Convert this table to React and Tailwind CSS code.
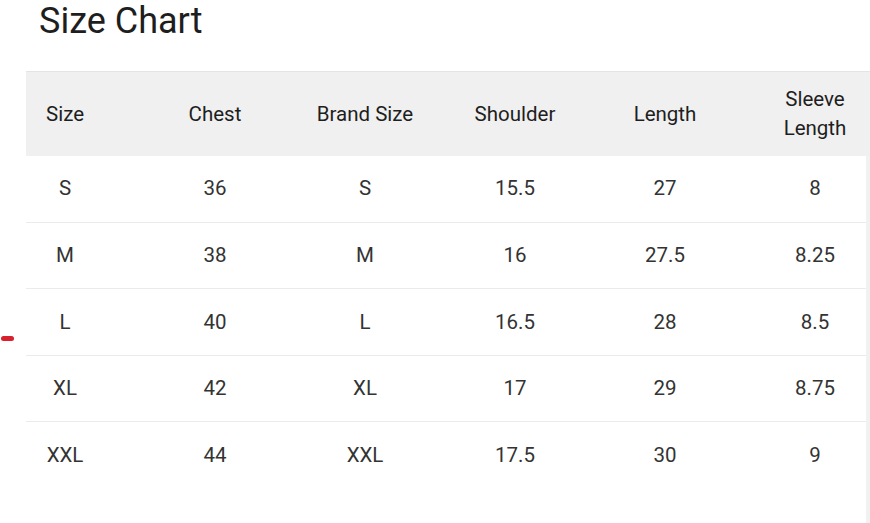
import React from "react";

const headers = ["Size", "Chest", "Brand Size", "Shoulder", "Length", "Sleeve Length"];
const rows = [
  ["S", "36", "S", "15.5", "27", "8"],
  ["M", "38", "M", "16", "27.5", "8.25"],
  ["L", "40", "L", "16.5", "28", "8.5"],
  ["XL", "42", "XL", "17", "29", "8.75"],
  ["XXL", "44", "XXL", "17.5", "30", "9"],
];

export default function App() {
  return (
    <div className="relative w-[870px] h-[523px] overflow-hidden bg-white text-[#222]" style={{ fontFamily: "Roboto, 'Liberation Sans', sans-serif" }}>
      <div className="absolute left-[1px] top-[336px] w-[13px] h-[5px] rounded-full bg-[#d8202e]" />
      <h1 className="pl-[39px] text-[36px] leading-[42px] font-normal text-[#1e1e1e]">Size Chart</h1>
      <div className="mt-[29px] ml-[26px] w-[844px] overflow-hidden border-t border-[#e4e4e4]">
        <div className="-ml-[36px] w-[900px] h-[84px] bg-[#f0f0f0] grid grid-cols-[repeat(6,150px)] items-center">
          {headers.map((h) => (
            <div key={h} className="flex justify-center">
              <span className={"text-center text-[20.5px] leading-[29px] font-normal text-[#1e1e1e] " + (h === "Sleeve Length" ? "w-[70px]" : "")}>{h}</span>
            </div>
          ))}
        </div>
        <div className="flex">
          <div className="w-[840px] overflow-hidden">
            {rows.map((r, i) => (
              <div key={i} className={"-ml-[36px] w-[900px] h-[66.6px] grid grid-cols-[repeat(6,150px)] items-center " + (i < rows.length - 1 ? "border-b border-[#ebebeb]" : "")}>
                {r.map((c, j) => (
                  <div key={j} className="text-center text-[20.5px] text-[#333]">{c}</div>
                ))}
              </div>
            ))}
            <div className="h-[40px]" />
          </div>
          <div className="w-[4px] bg-[#f1f1f1]" />
        </div>
      </div>
    </div>
  );
}
